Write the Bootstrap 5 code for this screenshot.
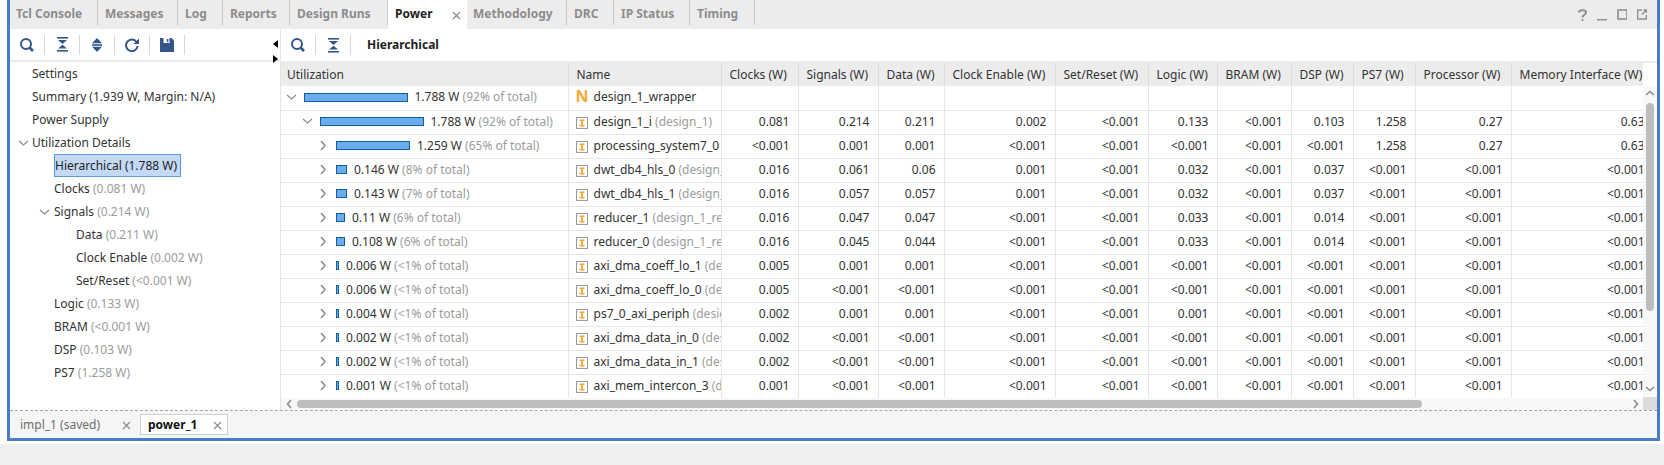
<!DOCTYPE html>
<html lang="en">
<head>
    <meta charset="UTF-8">
    <title>Power</title>
    <link href="https://cdn.jsdelivr.net/npm/bootstrap@5.3.0/dist/css/bootstrap.min.css" rel="stylesheet">
    <style>
        html, body { height: 465px; overflow: hidden; }
        body { background: #fff; font-family: "Noto Sans", sans-serif; font-size: 12px; color: #333; position: relative; }
        body::after { content: ""; display: block; height: 21px; margin-top: 3px; background: #efefef; }
        .shell { margin-left: 7px; width: 1653px; height: 441px; border: 3px solid #4a7bcb; border-top: 0; background: #fff; }

        .tool-tabs { height: 29px; background: #ececec; flex-wrap: nowrap; }
        .tab-item { height: 25px; line-height: 27px; padding-left: 7px; border-right: 1px solid #c8c8c8; color: #8c8c8c; font-weight: 700; white-space: nowrap; }
        .tab-item:nth-child(1) { width: 88px; padding-left: 6px; }
        .tab-item:nth-child(2) { width: 80px; }
        .tab-item:nth-child(3) { width: 45px; }
        .tab-item:nth-child(4) { width: 67px; }
        .tab-item:nth-child(5) { width: 98px; }
        .tab-item:nth-child(6) { width: 79px; }
        .tab-item:nth-child(7) { width: 100px; padding-left: 6px; }
        .tab-item:nth-child(8) { width: 47px; }
        .tab-item:nth-child(9) { width: 76px; }
        .tab-item:nth-child(10) { width: 65px; }
        .tab-item.active { height: 29px; background: #fff; color: #222; border-right: 0; position: relative; }
        .tab-close { position: absolute; left: 64px; top: 11px; }
        .win-btns { margin-left: auto; gap: 10px; padding: 9px 10px 0 0; }

        .mid { height: 382px; border-bottom: 1px dashed #a6a6a6; }
        .left-pane { width: 271px; flex: none; position: relative; }
        .right-pane { width: 1377px; flex: none; border-left: 1px solid #e4e4e4; margin-left: -1px; }
        .bar-tools { height: 32px; }
        .left-pane .bar-tools { height: 33px; border-bottom: 2px solid #ececec; }
        .tool-btn { width: 35px; height: 20px; border-right: 1px solid #d8d8d8; }
        .pane-title { margin-left: 16px; font-weight: 700; color: #222; }
        .split-arrow { position: absolute; right: 3px; width: 0; height: 0; border-style: solid; border-color: transparent; }
        .split-arrow.up { top: 11px; border-width: 4.5px 5px 4.5px 0; border-right-color: #000; }
        .split-arrow.down { top: 26px; border-width: 4.5px 0 4.5px 5px; border-left-color: #000; }

        .tree-row { height: 23.04px; line-height: 23px; white-space: nowrap; }
        .tree-row svg { vertical-align: 0; }
        .lvl-0 { padding-left: 22px; }
        .lvl-0.open { padding-left: 8px; }
        .lvl-0.open svg { margin-right: 3px; }
        .lvl-1 { padding-left: 44px; }
        .lvl-1.open { padding-left: 29px; }
        .lvl-1.open svg { margin-right: 4px; }
        .lvl-2 { padding-left: 66px; }
        .tree-sel { display: inline-block; height: 23px; line-height: 21px; padding: 0 3px 0 0; background: #c4d9f8; border: 1px solid #5a9ae0; color: #222; }
        .dim { color: #9c9c9c; }

        .grid-top { border-top: 2px solid #ececec; height: 349px; }
        .grid-wrap { width: 1362px; height: 335px; overflow: hidden; flex: none; }
        .power-grid { table-layout: fixed; width: 1372px; margin: 0; --bs-table-color: #333; border-color: #e6e6e6; }
        .power-grid th, .power-grid td { height: 24px; padding: 0 8px 1px; line-height: 22px; font-size: 12px; font-weight: 400; white-space: nowrap; overflow: hidden; border-right: 1px solid #e6e6e6; border-bottom: 1px solid #e6e6e6; vertical-align: middle; }
        .power-grid th { height: 23px; background: #ececec; border-right-color: #dcdcdc; border-bottom: 0; padding-bottom: 0; }
        .power-grid th.util-head { padding-left: 6px; }
        .power-grid td.util-cell { padding: 0 0 1px; }
        .power-grid td.name-cell { padding: 0 0 1px 7px; }
        .util-inner { display: flex; align-items: center; gap: 7px; }
        .exp-box { width: 16px; flex: none; display: flex; justify-content: center; margin-right: -2px; }
        .util-bar { height: 9px; background: #6aaeee; border: 1px solid #0e5fa6; flex: none; }
        .node-n { display: inline-block; width: 12px; height: 12px; margin-right: 6px; color: #fbaa3a; font-weight: 700; font-size: 16px; line-height: 12px; vertical-align: -1px; }
        .node-i { margin-right: 6px; vertical-align: -3px; }

        .vscroll { width: 14px; background: #f8f8f8; height: 335px; }
        .vscroll-head { height: 23px; width: 100%; background: #fff; flex: none; }
        .vthumb { width: 8px; height: 208px; margin: 7px 0 75px; border-radius: 4px; background: #bdbdbd; flex: none; }
        .hscroll { height: 12px; width: 100%; background: #f8f8f8; padding-left: 5px; }
        .hthumb { width: 1125px; height: 8px; margin-left: 5px; border-radius: 4px; background: #bdbdbd; }
        .corner { width: 14px; height: 13px; margin-top: -1px; background: #dcdcdc; }

        .bottom-tabs { height: 27px; background: #f5f5f5; padding: 3px 0 0 0; flex-wrap: nowrap; }
        .run-tab { height: 21px; line-height: 19px; padding-left: 9px; color: #6e6e6e; position: relative; border: 1px solid transparent; white-space: nowrap; }
        .run-tab svg { position: absolute; top: 6px; }
        .run-tab.plain { width: 130px; }
        .run-tab.plain svg { left: 111px; }
        .run-tab.active { width: 88px; padding-left: 7px; background: #fff; border-color: #cfcfcf; color: #111; font-weight: 700; }
        .run-tab.active svg { left: 72px; }
    </style>
</head>
<body class="m-0">
    <svg width="0" height="0" class="d-block position-absolute">
        <defs>
            <g id="ic-search" fill="none" stroke="#34568b"><circle cx="6" cy="6" r="5" stroke-width="2"/><path d="M9.5 9.5 13 13" stroke-width="2.6"/></g>
            <g id="ic-collapse" fill="#34568b"><rect x="0" y="0" width="11" height="1.6"/><path d="M1 3h9L5.5 7z"/><path d="M1 11.5h9L5.5 7.8z"/><rect x="0" y="13" width="11" height="1.6"/></g>
            <g id="ic-expand" fill="#34568b"><path d="M6 0l5 5.2H1z"/><rect x="1" y="6.2" width="10" height="1.6"/><path d="M6 14l5-5.2H1z"/></g>
            <g id="ic-refresh" fill="none" stroke="#34568b" stroke-width="2"><path d="M11.6 4A5.8 5.8 0 1 0 12.6 8"/><path d="M14 .5V6H8.5z" fill="#34568b" stroke="none"/></g>
            <g id="ic-save"><path d="M0 0h11.5L14 2.5V14H0z" fill="#34568b"/><rect x="3.5" y="0" width="6" height="5" fill="#fff"/><rect x="6.8" y="1" width="1.6" height="3" fill="#34568b"/></g>
            <path id="ic-right" d="M1 1l4 4.5-4 4.5" fill="none" stroke="#8a8a8a" stroke-width="1.5"/>
            <path id="ic-down" d="M1 1l4.5 4L10 1" fill="none" stroke="#8a8a8a" stroke-width="1.2"/>
            <path id="ic-x" d="M1 1l7 7M8 1 1 8" fill="none" stroke="#8c8c8c" stroke-width="1.2"/>
            <g id="ic-inst"><rect x=".5" y=".5" width="11" height="11" fill="#fff" stroke="#9a9a9a"/><path d="M3.5 2.5h5v1.500H7v4h1.500v1.500h-5V8H5V4H3.500z" fill="#fba53c"/></g>
        </defs>
    </svg>

    <div class="shell d-flex flex-column">
        <ul class="nav tool-tabs">
            <li class="tab-item">Tcl Console</li>
            <li class="tab-item">Messages</li>
            <li class="tab-item">Log</li>
            <li class="tab-item">Reports</li>
            <li class="tab-item">Design Runs</li>
            <li class="tab-item active">Power<svg class="tab-close" width="9" height="9"><use href="#ic-x"/></svg></li>
            <li class="tab-item">Methodology</li>
            <li class="tab-item">DRC</li>
            <li class="tab-item">IP Status</li>
            <li class="tab-item">Timing</li>
            <li class="win-btns d-flex align-items-start">
                <svg width="9" height="12" fill="none" stroke="#8f8f8f" stroke-width="2"><path d="M1 3.500C1 .5 8 .5 8 3.500 8 6 4.500 5.500 4.500 8.500"/><rect x="3.700" y="10" width="1.600" height="2" fill="#8f8f8f" stroke="none"/></svg>
                <svg width="10" height="12"><rect y="10" width="10" height="1.400" fill="#8f8f8f"/></svg>
                <svg width="10" height="12"><rect x="1" y="1" width="9" height="9" fill="none" stroke="#8f8f8f" stroke-width="1.600"/></svg>
                <svg width="10" height="12" fill="none" stroke="#8f8f8f" stroke-width="1.300"><path d="M5 1H.7v9h8.600V6M5 5.500 9.500 1M6.500 1h3v3"/></svg>
            </li>
        </ul>

        <div class="mid d-flex">
            <div class="left-pane">
                <div class="bar-tools d-flex align-items-center">
                    <div class="tool-btn d-flex align-items-center justify-content-center"><svg width="14" height="14"><use href="#ic-search"/></svg></div>
                    <div class="tool-btn d-flex align-items-center justify-content-center"><svg width="11" height="15"><use href="#ic-collapse"/></svg></div>
                    <div class="tool-btn d-flex align-items-center justify-content-center"><svg width="12" height="14"><use href="#ic-expand"/></svg></div>
                    <div class="tool-btn d-flex align-items-center justify-content-center"><svg width="14" height="14"><use href="#ic-refresh"/></svg></div>
                    <div class="tool-btn d-flex align-items-center justify-content-center"><svg width="14" height="14"><use href="#ic-save"/></svg></div>
                </div>
                <span class="split-arrow up"></span>
                <span class="split-arrow down"></span>
                <div class="tree-row lvl-0">Settings</div>
                <div class="tree-row lvl-0">Summary (1.939 W, Margin: N/A)</div>
                <div class="tree-row lvl-0">Power Supply</div>
                <div class="tree-row lvl-0 open"><svg width="11" height="7"><use href="#ic-down"/></svg><span>Utilization Details</span></div>
                <div class="tree-row lvl-1"><span class="tree-sel">Hierarchical (1.788 W)</span></div>
                <div class="tree-row lvl-1">Clocks <span class="dim">(0.081 W)</span></div>
                <div class="tree-row lvl-1 open"><svg width="11" height="7"><use href="#ic-down"/></svg><span>Signals <span class="dim">(0.214 W)</span></span></div>
                <div class="tree-row lvl-2">Data <span class="dim">(0.211 W)</span></div>
                <div class="tree-row lvl-2">Clock Enable <span class="dim">(0.002 W)</span></div>
                <div class="tree-row lvl-2">Set/Reset <span class="dim">(&lt;0.001 W)</span></div>
                <div class="tree-row lvl-1">Logic <span class="dim">(0.133 W)</span></div>
                <div class="tree-row lvl-1">BRAM <span class="dim">(&lt;0.001 W)</span></div>
                <div class="tree-row lvl-1">DSP <span class="dim">(0.103 W)</span></div>
                <div class="tree-row lvl-1">PS7 <span class="dim">(1.258 W)</span></div>
            </div>

            <div class="right-pane">
                <div class="bar-tools d-flex align-items-center">
                    <div class="tool-btn d-flex align-items-center justify-content-center"><svg width="14" height="14"><use href="#ic-search"/></svg></div>
                    <div class="tool-btn d-flex align-items-center justify-content-center"><svg width="11" height="15"><use href="#ic-collapse"/></svg></div>
                    <span class="pane-title">Hierarchical</span>
                </div>
                <div class="grid-top d-flex flex-wrap align-content-start">
                    <div class="grid-wrap">
                        <table class="table power-grid">
                            <colgroup>
                                <col style="width:287px"><col style="width:153px"><col style="width:77px"><col style="width:80px"><col style="width:66px"><col style="width:111px"><col style="width:93px"><col style="width:69px"><col style="width:74px"><col style="width:62px"><col style="width:62px"><col style="width:96px"><col style="width:142px">
                            </colgroup>
                            <thead>
                                <tr><th class="util-head">Utilization</th><th>Name</th><th>Clocks (W)</th><th>Signals (W)</th><th>Data (W)</th><th>Clock Enable (W)</th><th>Set/Reset (W)</th><th>Logic (W)</th><th>BRAM (W)</th><th>DSP (W)</th><th>PS7 (W)</th><th>Processor (W)</th><th>Memory Interface (W)</th></tr>
                            </thead>
                            <tbody id="gridBody"></tbody>
                        </table>
                    </div>
                    <div class="vscroll d-flex flex-column align-items-center">
                        <div class="vscroll-head"></div>
                        <svg width="10" height="6" class="mt-1 flex-shrink-0"><path d="M1 5l4-3.500L9 5" fill="none" stroke="#8a8a8a" stroke-width="1.600"/></svg>
                        <div class="vthumb"></div>
                        <svg width="10" height="6" class="flex-shrink-0"><path d="M1 1l4 3.500L9 1" fill="none" stroke="#8a8a8a" stroke-width="1.600"/></svg>
                    </div>
                    <div class="hscroll d-flex align-items-center">
                        <svg width="6" height="10"><path d="M5 1 1.500 5 5 9" fill="none" stroke="#8a8a8a" stroke-width="1.600"/></svg>
                        <div class="hthumb"></div>
                        <svg width="6" height="10" class="ms-auto me-1"><path d="M1 1l3.500 4L1 9" fill="none" stroke="#8a8a8a" stroke-width="1.600"/></svg>
                        <div class="corner"></div>
                    </div>
                </div>
            </div>
        </div>

        <ul class="nav bottom-tabs">
            <li class="run-tab plain">impl_1 (saved)<svg width="9" height="9"><use href="#ic-x"/></svg></li>
            <li class="run-tab active">power_1<svg width="9" height="9"><use href="#ic-x"/></svg></li>
        </ul>
    </div>

    <script>
        // util bar width, depth, expanded, text, share, name, module (as far as the column shows it), values
        var L = "<0.001";
        var rows = [
            [103.5, 0, 1, "1.788 W", "92%", "design_1_wrapper", "", []],
            [103.5, 1, 1, "1.788 W", "92%", "design_1_i", "(design_1)", ["0.081","0.214","0.211","0.002",L,"0.133",L,"0.103","1.258","0.27","0.63"]],
            [74, 2, 0, "1.259 W", "65%", "processing_system7_0", "", [L,"0.001","0.001",L,L,L,L,L,"1.258","0.27","0.63"]],
            [11, 2, 0, "0.146 W", "8%", "dwt_db4_hls_0", "(design_", ["0.016","0.061","0.06","0.001",L,"0.032",L,"0.037",L,L,L]],
            [11, 2, 0, "0.143 W", "7%", "dwt_db4_hls_1", "(design_", ["0.016","0.057","0.057","0.001",L,"0.032",L,"0.037",L,L,L]],
            [9, 2, 0, "0.11 W", "6%", "reducer_1", "(design_1_re", ["0.016","0.047","0.047",L,L,"0.033",L,"0.014",L,L,L]],
            [9, 2, 0, "0.108 W", "6%", "reducer_0", "(design_1_re", ["0.016","0.045","0.044",L,L,"0.033",L,"0.014",L,L,L]],
            [3, 2, 0, "0.006 W", "<1%", "axi_dma_coeff_lo_1", "(de", ["0.005","0.001","0.001",L,L,L,L,L,L,L,L]],
            [3, 2, 0, "0.006 W", "<1%", "axi_dma_coeff_lo_0", "(de", ["0.005",L,L,L,L,L,L,L,L,L,L]],
            [3, 2, 0, "0.004 W", "<1%", "ps7_0_axi_periph", "(desig", ["0.002","0.001","0.001",L,L,"0.001",L,L,L,L,L]],
            [3, 2, 0, "0.002 W", "<1%", "axi_dma_data_in_0", "(des", ["0.002",L,L,L,L,L,L,L,L,L,L]],
            [3, 2, 0, "0.002 W", "<1%", "axi_dma_data_in_1", "(des", ["0.002",L,L,L,L,L,L,L,L,L,L]],
            [3, 2, 0, "0.001 W", "<1%", "axi_mem_intercon_3", "(d", ["0.001",L,L,L,L,L,L,L,L,L,L]]
        ];
        function esc(s) { return s.replace(/</g, "&lt;"); }
        var html = "";
        rows.forEach(function (r, i) {
            var arrow = r[2]
                ? '<svg width="11" height="7"><use href="#ic-down"/></svg>'
                : '<svg width="7" height="11"><use href="#ic-right"/></svg>';
            var nameIcon = i === 0
                ? '<span class="node-n">N</span>'
                : '<svg class="node-i" width="12" height="12"><use href="#ic-inst"/></svg>';
            var cells = "";
            for (var c = 0; c < 11; c++) {
                cells += '<td class="text-end">' + esc(r[7][c] || "") + "</td>";
            }
            html += '<tr><td class="util-cell"><div class="util-inner" style="padding-left:' + (2 + 16 * r[1]) + 'px">' +
                '<span class="exp-box">' + arrow + "</span>" +
                '<span class="util-bar" style="width:' + r[0] + 'px"></span>' +
                "<span>" + r[3] + ' <span class="dim">(' + esc(r[4]) + " of total)</span></span></div></td>" +
                '<td class="name-cell">' + nameIcon + r[5] + (r[6] ? ' <span class="dim">' + r[6] + "</span>" : "") + "</td>" +
                cells + "</tr>";
        });
        document.getElementById("gridBody").innerHTML = html;
    </script>
</body>
</html>
